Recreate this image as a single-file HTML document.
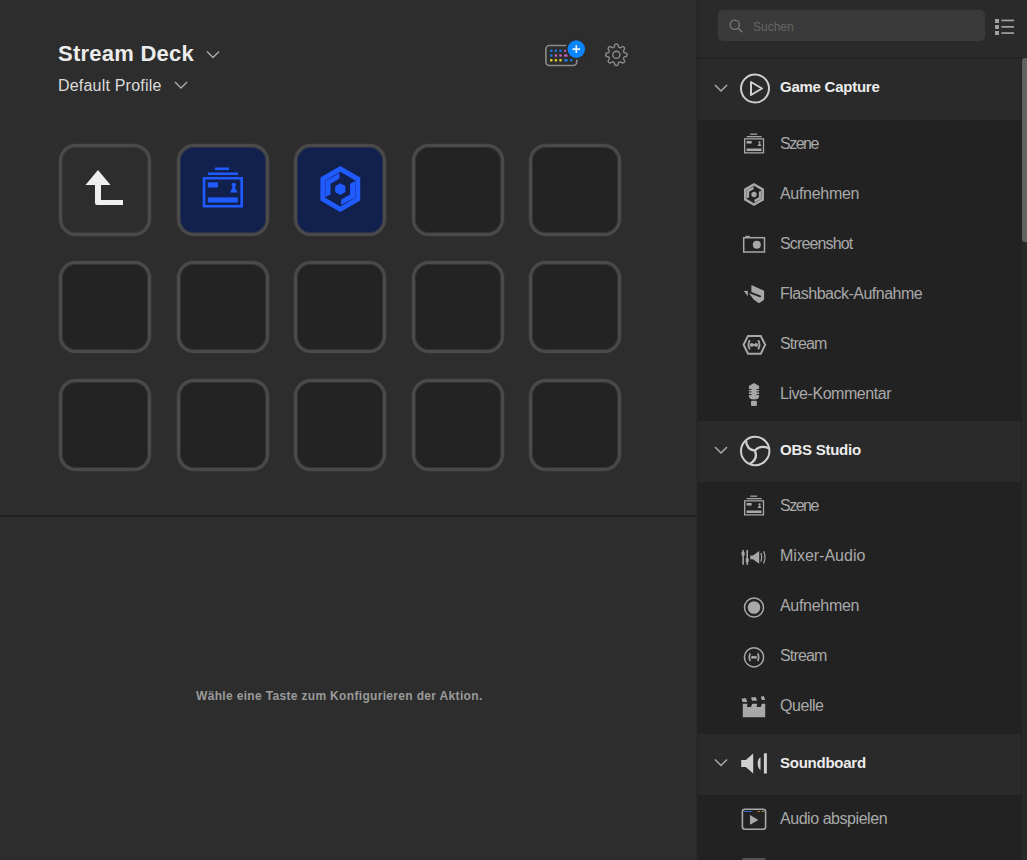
<!DOCTYPE html>
<html><head><meta charset="utf-8">
<style>
*{margin:0;padding:0;box-sizing:border-box}
html,body{width:1027px;height:860px;overflow:hidden;background:#2d2d2d;font-family:"Liberation Sans",sans-serif}
.abs{position:absolute}
#title{left:58px;top:41px;font-size:22px;font-weight:bold;color:#ececec;letter-spacing:0.25px;white-space:nowrap}
#profile{left:58px;top:77px;font-size:16px;color:#dcdcdc;letter-spacing:0.2px;white-space:nowrap}
.key{position:absolute;width:92px;height:92px;border:3px solid #4a4a4a;border-radius:17px;background:#232323;box-shadow:0 0 0 0.6px #3a3a3a,inset 0 0 0 1px rgba(70,70,70,0.45)}
.key.blue{background:#12204e}
.key.back{background:#2d2d2d}
#sep{left:0;top:515px;width:696px;height:1px;background:#1f1f1f;box-shadow:0 1px 0 #242424}
#hint{left:196px;top:689px;font-size:12px;font-weight:bold;color:#9a9a9a;letter-spacing:0.33px;white-space:nowrap}
#vline{left:696px;top:0;width:1px;height:860px;background:#2a2a2a}
#rp{left:697px;top:0;width:330px;height:860px;background:#222222;overflow:hidden}
#rhead{left:1px;top:0;width:329px;height:57px;background:#2a2a2a}
#rline{left:1px;top:57px;width:329px;height:1px;background:#232323}
#search{left:21px;top:10px;width:267px;height:31px;border-radius:5px;background:#3a3a3a}
#search span{position:absolute;left:35px;top:10px;font-size:12px;color:#666}
.cat{position:absolute;left:1px;width:323px;height:61px;background:#2a2a2a}
.cat .name{position:absolute;left:82px;top:20px;font-size:15px;font-weight:bold;color:#ececec;white-space:nowrap;letter-spacing:-0.25px}
.item{position:absolute;left:1px;width:323px;height:50px}
.item .name{position:absolute;left:82px;top:15px;font-size:16px;color:#a9a9a9;white-space:nowrap;letter-spacing:-0.3px}
.ic{position:absolute}
#track{left:325px;top:58px;width:5px;height:802px;background:#292929}
#thumb{left:325px;top:58px;width:5px;height:184px;background:#626262;border-radius:3px 0 0 3px}
</style></head><body>
<div class="abs" id="title">Stream Deck</div>
<div class="abs" id="profile">Default Profile</div>

<div class="key back" style="left:59px;top:144px"></div>
<div class="key blue" style="left:177px;top:144px"></div>
<div class="key blue" style="left:294px;top:144px"></div>
<div class="key" style="left:412px;top:144px"></div>
<div class="key" style="left:529px;top:144px"></div>
<div class="key" style="left:59px;top:261px"></div>
<div class="key" style="left:177px;top:261px"></div>
<div class="key" style="left:294px;top:261px"></div>
<div class="key" style="left:412px;top:261px"></div>
<div class="key" style="left:529px;top:261px"></div>
<div class="key" style="left:59px;top:379px"></div>
<div class="key" style="left:177px;top:379px"></div>
<div class="key" style="left:294px;top:379px"></div>
<div class="key" style="left:412px;top:379px"></div>
<div class="key" style="left:529px;top:379px"></div>

<div class="abs" id="sep"></div>
<div class="abs" id="hint">Wähle eine Taste zum Konfigurieren der Aktion.</div>
<div class="abs" id="vline"></div>

<div class="abs" id="rp">
  <div class="abs" id="rhead"></div>
  <div class="abs" id="rline"></div>
  <div class="abs" id="search"><span>Suchen</span></div>

  <div class="cat" style="top:59px"><div class="name" style="top:19px">Game Capture</div></div>
  <div class="item" style="top:120px"><div class="name" style="letter-spacing:-1.5px">Szene</div></div>
  <div class="item" style="top:170px"><div class="name" style="letter-spacing:-0.3px">Aufnehmen</div></div>
  <div class="item" style="top:220px"><div class="name" style="letter-spacing:-0.85px">Screenshot</div></div>
  <div class="item" style="top:270px"><div class="name" style="letter-spacing:-0.5px">Flashback-Aufnahme</div></div>
  <div class="item" style="top:320px"><div class="name" style="letter-spacing:-0.85px">Stream</div></div>
  <div class="item" style="top:370px"><div class="name" style="letter-spacing:-0.45px">Live-Kommentar</div></div>
  <div class="cat" style="top:421px"><div class="name">OBS Studio</div></div>
  <div class="item" style="top:482px"><div class="name" style="letter-spacing:-1.5px">Szene</div></div>
  <div class="item" style="top:532px"><div class="name" style="letter-spacing:0px">Mixer-Audio</div></div>
  <div class="item" style="top:582px"><div class="name" style="letter-spacing:-0.3px">Aufnehmen</div></div>
  <div class="item" style="top:632px"><div class="name" style="letter-spacing:-0.85px">Stream</div></div>
  <div class="item" style="top:682px"><div class="name" style="letter-spacing:-0.45px">Quelle</div></div>
  <div class="cat" style="top:734px"><div class="name">Soundboard</div></div>
  <div class="item" style="top:795px"><div class="name" style="letter-spacing:-0.45px">Audio abspielen</div></div>

  <div class="abs" id="track"></div>
  <div class="abs" id="thumb"></div>
</div>
<svg id="ov" width="1027" height="860" viewBox="0 0 1027 860" style="position:absolute;left:0;top:0">
<defs>
 <g id="scene">
  <rect x="215" y="167.5" width="14" height="2.5"/>
  <rect x="208" y="172.5" width="30" height="2.5"/>
  <path fill-rule="evenodd" d="M202.7,177 H243 V207.6 H202.7Z M205.3,179.6 V205 H240.4 V179.6Z"/>
  <rect x="207.8" y="182.4" width="10.2" height="5.1"/>
  <circle cx="233.8" cy="185" r="2.2"/>
  <path d="M230,192.6 L237.6,192.6 L234.8,187 L232.8,187Z"/>
  <rect x="207.8" y="197.4" width="30" height="5.1"/>
 </g>
 <g id="hexrec">
  <g fill="#1f5bff">
<path fill-rule="evenodd" d="M340.30,166.10 L360.22,177.60 L360.22,200.60 L340.30,212.10 L320.38,200.60 L320.38,177.60Z M340.30,171.70 L355.37,180.40 L355.37,197.80 L340.30,206.50 L325.23,197.80 L325.23,180.40Z"/>
<polygon points="340.30,183.20 345.41,186.15 345.41,192.05 340.30,195.00 335.19,192.05 335.19,186.15"/>
</g>
<g fill="#1f5bff"><polygon points="339.49,173.11 325.43,180.78 325.43,197.08 330.54,194.53 330.54,183.66 339.49,178.54"/><polygon points="341.11,205.09 355.17,197.42 355.17,181.12 350.06,183.67 350.06,194.54 341.11,199.66"/></g>
 </g>
</defs>

<!-- title chevrons -->
<g fill="none" stroke="#a8a8a8" stroke-width="1.5">
 <polyline points="207,51.5 213,57.5 219,51.5"/>
 <polyline points="175,82 181,88 187,82"/>
 <polyline points="715,85 721,91 727,85"/>
 <polyline points="715,447 721,453 727,447"/>
 <polyline points="715,759.5 721,765.5 727,759.5"/>
</g>

<!-- back arrow -->
<g fill="#efefef">
 <polygon points="98,170 85.5,185 110.5,185"/>
 <path d="M95,184 H101 V200 H123 V205 H97 Q95,205 95,203Z"/>
</g>

<!-- key 2 scene -->
<g fill="#1f5bff"><use href="#scene"/></g>
<!-- key 3 hex -->
<use href="#hexrec"/>

<!-- device icon -->
<g>
 <rect x="545.9" y="45.5" width="30.8" height="20" rx="3.5" fill="none" stroke="#8a8a8a" stroke-width="1.6"/>
 <g>
  <rect x="550" y="49.4" width="2.6" height="2.6" rx="1" fill="#1a78e0"/>
  <rect x="554.6" y="49.4" width="2.6" height="2.6" rx="1" fill="#1a78e0"/>
  <rect x="559.2" y="49.4" width="2.6" height="2.6" rx="1" fill="#1a78e0"/>
  <rect x="564" y="49.4" width="2.6" height="2.6" rx="1" fill="#c060c0"/>
  <rect x="550" y="54.2" width="2.6" height="2.6" rx="1" fill="#1a78e0"/>
  <rect x="554.6" y="54.2" width="2.6" height="2.6" rx="1" fill="#c060c0"/>
  <rect x="559.2" y="54.2" width="2.6" height="2.6" rx="1" fill="#c060c0"/>
  <rect x="564" y="54.2" width="3.6" height="2.6" rx="1" fill="#c060c0"/>
  <rect x="550" y="58.9" width="2.6" height="2.6" rx="1" fill="#e0d020"/>
  <rect x="554.6" y="58.9" width="2.6" height="2.6" rx="1" fill="#e0d020"/>
  <rect x="559.2" y="58.9" width="2.6" height="2.6" rx="1" fill="#e0d020"/>
  <rect x="564" y="58.9" width="3.8" height="2.6" rx="1" fill="#1a78e0"/>
  <rect x="570" y="58.9" width="2.6" height="2.6" rx="1" fill="#1a78e0"/>
 </g>
 <circle cx="576.3" cy="49.1" r="10.6" fill="#2d2d2d"/>
 <circle cx="576.3" cy="49.1" r="8.8" fill="#0a84ff"/>
 <path d="M576.3,45.3 V52.9 M572.5,49.1 H580.1" stroke="#e8f4ff" stroke-width="1.6"/>
</g>

<!-- gear -->
<g fill="none" stroke="#8c8c8c" stroke-width="1.4" stroke-linejoin="round">
 <path d="M616.40,44.10 L616.68,44.11 L616.96,44.14 L617.23,44.21 L617.50,44.32 L617.75,44.53 L617.97,44.88 L618.14,45.39 L618.28,45.97 L618.40,46.48 L618.53,46.84 L618.69,47.07 L618.86,47.22 L619.05,47.33 L619.23,47.42 L619.42,47.50 L619.62,47.58 L619.81,47.64 L620.02,47.70 L620.25,47.71 L620.52,47.66 L620.87,47.51 L621.32,47.23 L621.82,46.91 L622.31,46.67 L622.71,46.58 L623.03,46.61 L623.30,46.72 L623.54,46.87 L623.76,47.04 L623.97,47.23 L624.16,47.44 L624.33,47.66 L624.48,47.90 L624.59,48.17 L624.62,48.49 L624.53,48.89 L624.29,49.38 L623.97,49.88 L623.69,50.33 L623.54,50.68 L623.49,50.95 L623.50,51.18 L623.56,51.39 L623.62,51.58 L623.70,51.78 L623.78,51.97 L623.87,52.15 L623.98,52.34 L624.13,52.51 L624.36,52.67 L624.72,52.80 L625.23,52.92 L625.81,53.06 L626.32,53.23 L626.67,53.45 L626.88,53.70 L626.99,53.97 L627.06,54.24 L627.09,54.52 L627.10,54.80 L627.09,55.08 L627.06,55.36 L626.99,55.63 L626.88,55.90 L626.67,56.15 L626.32,56.37 L625.81,56.54 L625.23,56.68 L624.72,56.80 L624.36,56.93 L624.13,57.09 L623.98,57.26 L623.87,57.45 L623.78,57.63 L623.70,57.82 L623.62,58.02 L623.56,58.21 L623.50,58.42 L623.49,58.65 L623.54,58.92 L623.69,59.27 L623.97,59.72 L624.29,60.22 L624.53,60.71 L624.62,61.11 L624.59,61.43 L624.48,61.70 L624.33,61.94 L624.16,62.16 L623.97,62.37 L623.76,62.56 L623.54,62.73 L623.30,62.88 L623.03,62.99 L622.71,63.02 L622.31,62.93 L621.82,62.69 L621.32,62.37 L620.87,62.09 L620.52,61.94 L620.25,61.89 L620.02,61.90 L619.81,61.96 L619.62,62.02 L619.42,62.10 L619.23,62.18 L619.05,62.27 L618.86,62.38 L618.69,62.53 L618.53,62.76 L618.40,63.12 L618.28,63.63 L618.14,64.21 L617.97,64.72 L617.75,65.07 L617.50,65.28 L617.23,65.39 L616.96,65.46 L616.68,65.49 L616.40,65.50 L616.12,65.49 L615.84,65.46 L615.57,65.39 L615.30,65.28 L615.05,65.07 L614.83,64.72 L614.66,64.21 L614.52,63.63 L614.40,63.12 L614.27,62.76 L614.11,62.53 L613.94,62.38 L613.75,62.27 L613.57,62.18 L613.38,62.10 L613.18,62.02 L612.99,61.96 L612.78,61.90 L612.55,61.89 L612.28,61.94 L611.93,62.09 L611.48,62.37 L610.98,62.69 L610.49,62.93 L610.09,63.02 L609.77,62.99 L609.50,62.88 L609.26,62.73 L609.04,62.56 L608.83,62.37 L608.64,62.16 L608.47,61.94 L608.32,61.70 L608.21,61.43 L608.18,61.11 L608.27,60.71 L608.51,60.22 L608.83,59.72 L609.11,59.27 L609.26,58.92 L609.31,58.65 L609.30,58.42 L609.24,58.21 L609.18,58.02 L609.10,57.82 L609.02,57.63 L608.93,57.45 L608.82,57.26 L608.67,57.09 L608.44,56.93 L608.08,56.80 L607.57,56.68 L606.99,56.54 L606.48,56.37 L606.13,56.15 L605.92,55.90 L605.81,55.63 L605.74,55.36 L605.71,55.08 L605.70,54.80 L605.71,54.52 L605.74,54.24 L605.81,53.97 L605.92,53.70 L606.13,53.45 L606.48,53.23 L606.99,53.06 L607.57,52.92 L608.08,52.80 L608.44,52.67 L608.67,52.51 L608.82,52.34 L608.93,52.15 L609.02,51.97 L609.10,51.78 L609.18,51.58 L609.24,51.39 L609.30,51.18 L609.31,50.95 L609.26,50.68 L609.11,50.33 L608.83,49.88 L608.51,49.38 L608.27,48.89 L608.18,48.49 L608.21,48.17 L608.32,47.90 L608.47,47.66 L608.64,47.44 L608.83,47.23 L609.04,47.04 L609.26,46.87 L609.50,46.72 L609.77,46.61 L610.09,46.58 L610.49,46.67 L610.98,46.91 L611.48,47.23 L611.93,47.51 L612.28,47.66 L612.55,47.71 L612.78,47.70 L612.99,47.64 L613.18,47.58 L613.38,47.50 L613.57,47.42 L613.75,47.33 L613.94,47.22 L614.11,47.07 L614.27,46.84 L614.40,46.48 L614.52,45.97 L614.66,45.39 L614.83,44.88 L615.05,44.53 L615.30,44.32 L615.57,44.21 L615.84,44.14 L616.12,44.11Z"/>
 <circle cx="616.4" cy="54.8" r="3.6"/>
</g>
<!-- search icon -->
<g fill="none" stroke="#7a7a7a" stroke-width="1.3">
 <circle cx="734.8" cy="24.8" r="4.6"/>
 <line x1="738.2" y1="28.2" x2="742.3" y2="32.3"/>
</g>
<!-- list icon -->
<g fill="#a0a0a0">
 <rect x="995" y="19" width="4" height="4"/><rect x="995" y="25" width="4" height="4"/><rect x="995" y="31" width="4" height="4"/>
 <rect x="1001.4" y="19.6" width="12.6" height="1.7"/><rect x="1001.4" y="26" width="12.6" height="1.7"/><rect x="1001.4" y="32.2" width="12.6" height="1.7"/>
</g>

<!-- category icons -->
<g fill="none" stroke="#cfcfcf" stroke-width="2">
 <circle cx="755" cy="88.5" r="14"/>
 <path d="M751,82 L762,88.5 L751,95Z" stroke-linejoin="round"/>
 <circle cx="755.2" cy="451" r="14.2"/>
 <path d="M746,440.9 Q746.7,449.6 754.8,450.7 Q760.2,444.8 768.6,448.2 M754.8,450.7 Q758.6,458.8 749.8,463.8" stroke-width="2.3" stroke-linejoin="round"/>
</g>
<g fill="#cfcfcf">
 <path d="M741.2,760 H745.8 L753.2,753.4 V773.4 L745.8,767 H741.2Z"/>
 <path d="M760.5,757.2 V769.9 Q757.7,768.5 757.7,763.5 Q757.7,758.5 760.5,757.2Z"/>
 <rect x="763.9" y="753.3" width="3" height="20.2" rx="0.6"/>
</g>

<!-- item icons -->
<g fill="#a8a8a8">
 <g transform="translate(744,133.5) scale(0.5) translate(-202.7,-167.4)"><use href="#scene"/></g>
 <g transform="translate(744,495.5) scale(0.5) translate(-202.7,-167.4)"><use href="#scene"/></g>
</g>
<g transform="translate(754,194.5) scale(0.5) translate(-340.3,-189.1)">
 <g fill="#a8a8a8">
  <path fill-rule="evenodd" d="M340.30,166.10 L360.22,177.60 L360.22,200.60 L340.30,212.10 L320.38,200.60 L320.38,177.60Z M340.30,171.70 L355.37,180.40 L355.37,197.80 L340.30,206.50 L325.23,197.80 L325.23,180.40Z"/>
  <polygon points="340.30,183.20 345.41,186.15 345.41,192.05 340.30,195.00 335.19,192.05 335.19,186.15"/>
 </g>
 <g fill="#a8a8a8"><polygon points="339.49,173.11 325.43,180.78 325.43,197.08 330.54,194.53 330.54,183.66 339.49,178.54"/><polygon points="341.11,205.09 355.17,197.42 355.17,181.12 350.06,183.67 350.06,194.54 341.11,199.66"/></g>
</g>

<!-- screenshot -->
<g fill="none" stroke="#a8a8a8" stroke-width="1.5">
 <rect x="743.7" y="237.7" width="20.8" height="14.3"/>
</g>
<rect x="745.4" y="235.8" width="4.4" height="2" fill="#a8a8a8"/>
<circle cx="756.8" cy="244.8" r="4" fill="#a8a8a8"/>

<!-- flashback -->
<g fill="#a8a8a8">
 <polygon points="751.4,284.9 764.1,290.75 764.1,299.87 758.89,303.13 753.68,299.54 749.2,293.6 751.4,291.8"/>
 <polygon points="743.9,291.07 747.82,290.75 747.82,296.29"/>
</g>
<path d="M749.6,292.3 L760.2,296.3" stroke="#222" stroke-width="1.8" stroke-linecap="round"/>
<!-- stream hex -->
<g fill="none" stroke="#a8a8a8" stroke-width="2">
 <polygon points="743.6,344.8 748,336 760.8,336 765.2,344.8 760.8,353.8 748,353.8"/>
 <path d="M749.8,340.2 Q747.2,344.8 749.8,349.4 M758.2,340.2 Q760.8,344.8 758.2,349.4" stroke-width="1.9"/>
</g>
<g fill="#a8a8a8"><circle cx="751.8" cy="344.9" r="1.9"/><circle cx="756.2" cy="344.9" r="1.9"/><rect x="751.8" y="344" width="4.4" height="1.8"/></g>

<!-- mic -->
<g fill="#a8a8a8">
 <path d="M748.9,386 L754,382.9 L759.1,386 V396 Q759.1,399.5 754,399.5 Q748.9,399.5 748.9,396Z"/>
 <rect x="751" y="400.8" width="5.9" height="5.2" rx="1"/>
</g>
<g stroke="#222" stroke-width="1">
 <line x1="748.5" y1="389.4" x2="751.5" y2="389.4"/><line x1="756.5" y1="389.4" x2="759.5" y2="389.4"/>
 <line x1="748.5" y1="391.9" x2="751.5" y2="391.9"/><line x1="756.5" y1="391.9" x2="759.5" y2="391.9"/>
 <line x1="748.5" y1="394.6" x2="751.5" y2="394.6"/><line x1="756.5" y1="394.6" x2="759.5" y2="394.6"/>
</g>

<!-- mixer audio -->
<g fill="#a8a8a8">
 <rect x="742.3" y="550" width="1.6" height="14.7"/>
 <rect x="741.6" y="552" width="3" height="3.6"/>
 <rect x="746.4" y="550" width="1.6" height="14.7"/>
 <rect x="745.7" y="558.5" width="3" height="3.6"/>
 <path d="M750.3,555.5 H753 L759.2,550.9 V563.7 L753,559.2 H750.3Z"/>
</g>
<path d="M760.8,553 Q762.5,557.3 760.8,561.6 M763.6,551.2 Q766.4,557.3 763.6,563.4" fill="none" stroke="#a8a8a8" stroke-width="1.2"/>

<!-- record -->
<circle cx="754" cy="607.5" r="9.5" fill="none" stroke="#a8a8a8" stroke-width="1.5"/>
<circle cx="754" cy="607.5" r="6.3" fill="#a8a8a8"/>

<!-- stream circle -->
<circle cx="754" cy="657.3" r="9.6" fill="none" stroke="#a8a8a8" stroke-width="1.5"/>
<path d="M750.2,653.4 Q748.3,657.3 750.2,661.2 M757.8,653.4 Q759.7,657.3 757.8,661.2" fill="none" stroke="#a8a8a8" stroke-width="1.6"/>
<g fill="#a8a8a8"><circle cx="752.6" cy="657.3" r="1.5"/><circle cx="755.4" cy="657.3" r="1.5"/><rect x="752.6" y="656.6" width="2.8" height="1.4"/></g>

<!-- clapper -->
<g fill="#a8a8a8">
 <path d="M742.8,703.8 H747.5 L746.9,707.1 H751 L752.2,703.8 H757.2 L756.6,707.1 H760.7 L761.9,703.8 H765.2 V717.2 H742.8Z"/>
 <polygon points="741.5,698.8 745.8,698 747.3,701.9 742.5,701.9"/>
 <polygon points="751,697.5 755.8,696.9 757,700.8 752,700.8"/>
 <polygon points="760.7,696.8 763.8,696.1 765.2,699.9 761.8,699.9"/>
</g>

<!-- audio abspielen -->
<rect x="742.4" y="809.2" width="23.2" height="20" rx="2.5" fill="none" stroke="#a8a8a8" stroke-width="1.6"/>
<polygon points="750,815 758.4,819.9 750,824.8" fill="#a8a8a8"/>
<rect x="744" y="811" width="7.5" height="1" fill="#3a6ad0"/>
<rect x="757.7" y="811" width="2.4" height="1" fill="#c07030"/>
<rect x="761.5" y="811" width="2.5" height="1" fill="#70a040"/>
<rect x="742" y="858" width="24" height="4" rx="2.5" fill="#555"/>
</svg>
</body></html>
